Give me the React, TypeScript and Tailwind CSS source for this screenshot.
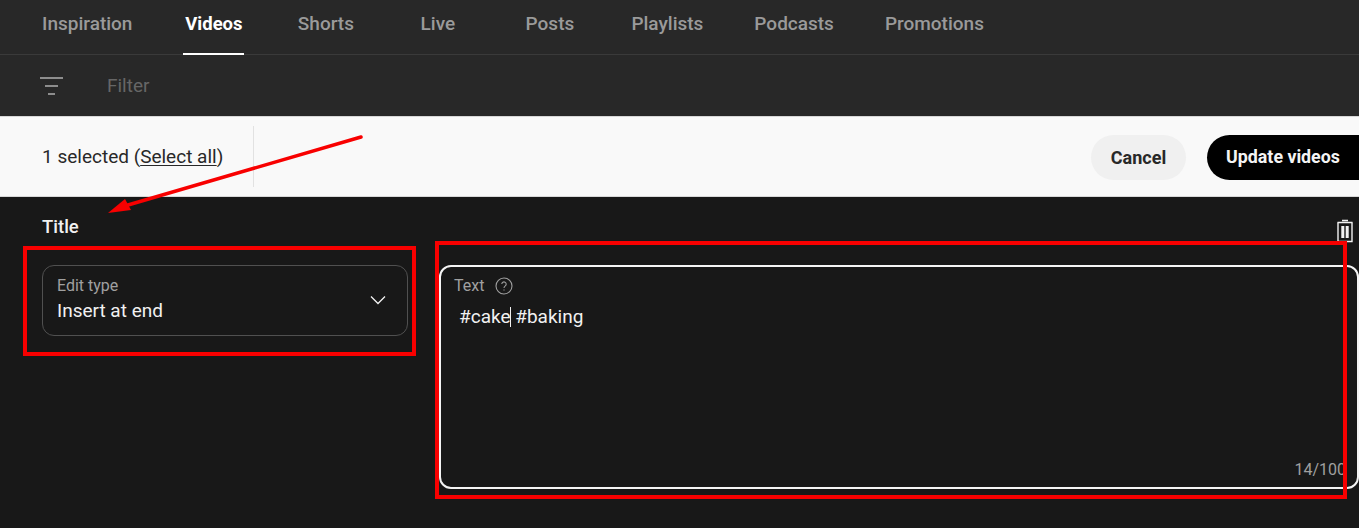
import React from "react";

const tabs = ["Inspiration", "Videos", "Shorts", "Live", "Posts", "Playlists", "Podcasts", "Promotions"];

export default function App() {
  return (
    <div className="relative h-[528px] w-[1359px] overflow-hidden bg-[#181818] font-['Roboto',sans-serif]">
      <div className="flex h-[55px] items-stretch gap-[51px] border-b border-[#3a3a3a] bg-[#282828] pl-[42px]">
        {tabs.map((t) => (
          <div
            key={t}
            className={
              t === "Videos"
                ? "relative flex min-w-[61px] justify-center pt-[13px] text-[18.5px] leading-[22px] font-bold text-white"
                : "relative flex min-w-[61px] justify-center pt-[13px] text-[19px] leading-[22px] font-medium text-[#9a9a9a]"
            }
          >
            {t}
            {t === "Videos" && <span className="absolute right-0 bottom-[-1px] left-0 h-[2px] bg-white" />}
          </div>
        ))}
      </div>

      <div className="flex h-[61px] items-center bg-[#282828] pl-[40px]">
        <svg width="24" height="18" viewBox="0 0 24 18" fill="none" stroke="#f1f1f1" strokeWidth="1.2">
          <path d="M0 1h23M5 9h13M8 17h7" />
        </svg>
        <span className="ml-[43px] text-[19px] leading-[22px] text-[#666666]">Filter</span>
      </div>

      <div className="flex h-[81px] items-center border-y border-[#d8d8d8] bg-[#f9f9f9] pl-[42px]">
        <div className="w-[211px] text-[19px] leading-[24px] text-[#282828]">
          1 selected (<span className="underline underline-offset-2">Select all</span>)
        </div>
        <div className="h-[61px] w-px bg-[#e2e2e2]" />
        <div className="ml-auto flex items-center gap-[21px]">
          <button className="mt-[1px] h-[45px] w-[95px] rounded-full bg-[#f0f0f0] text-[18px] font-bold text-[#282828]">Cancel</button>
          <button className="mt-[1px] h-[45px] w-[152px] rounded-l-full rounded-r-[22px] bg-black text-[17.8px] font-bold text-[#f4f4f4]">Update videos</button>
        </div>
      </div>

      <div className="flex items-start justify-between pt-[19px] pr-[5px] pl-[42px]">
        <span className="text-[18.5px] leading-[22px] font-medium text-[#f1f1f1]">Title</span>
        <svg width="18" height="24" viewBox="0 0 18 24" fill="none" stroke="#f1f1f1" strokeWidth="1.4" className="mt-[3px]">
          <path d="M6 1.5h6M1.5 3.5h15" />
          <path d="M2 3.5v19h14v-19" />
          <path d="M6.8 7v12M11.2 7v12" strokeWidth="3" />
        </svg>
      </div>

      <div className="flex items-start pt-[22px] pl-[42px]">
        <div className="flex h-[71px] w-[366px] items-center justify-between rounded-[12px] border border-[#505050] pr-[20px] pl-[14px]">
          <div className="mb-[2px]">
            <div className="text-[16px] leading-[18px] text-[#a0a0a0]">Edit type</div>
            <div className="mt-[4px] text-[19px] leading-[24px] text-[#f1f1f1]">Insert at end</div>
          </div>
          <svg width="18" height="18" viewBox="0 0 18 18" fill="none" stroke="#f1f1f1" strokeWidth="1.3" className="mb-[1px]">
            <path d="M2 5.5l7 7 7-7" />
          </svg>
        </div>

        <div className="relative ml-[31px] h-[224px] flex-1 rounded-[12px] border-2 border-[#f4f4f4] pt-[10px] pl-[13px]">
          <div className="flex items-center gap-[11px] text-[16px] leading-[18px] text-[#a0a0a0]">
            Text
            <svg width="18" height="18" viewBox="0 0 18 18" fill="none" stroke="#a0a0a0" strokeWidth="1.1">
              <circle cx="9" cy="9" r="8" />
              <path d="M6.8 7.1a2.2 2.2 0 1 1 3.5 1.8c-.8.6-1.3 1-1.3 2" />
              <path d="M9 12.4v1.2" />
            </svg>
          </div>
          <div className="mt-[8px] pl-[5px] text-[19px] leading-[24px] text-[#f1f1f1]">
            #cake<span className="-ml-[1px] inline-block h-[20px] w-px translate-y-[4px] bg-[#f1f1f1]" /> #baking
          </div>
          <div className="absolute right-[11px] bottom-[8px] text-[16px] leading-[18px] text-[#a0a0a0]">14/100</div>
        </div>
      </div>

      <div className="absolute top-[246px] left-[23px] h-[110px] w-[393px] border-[4px] border-[#f80000]" />
      <div className="absolute top-[241px] left-[435px] h-[258px] w-[912px] border-[4px] border-[#f80000]" />
      <svg className="absolute top-0 left-0" width="1359" height="528" fill="none">
        <path d="M361 137L128 205" stroke="#f80000" strokeWidth="3.5" strokeLinecap="round" />
        <path d="M108 213l17-14 6 11z" fill="#f80000" />
      </svg>
    </div>
  );
}
